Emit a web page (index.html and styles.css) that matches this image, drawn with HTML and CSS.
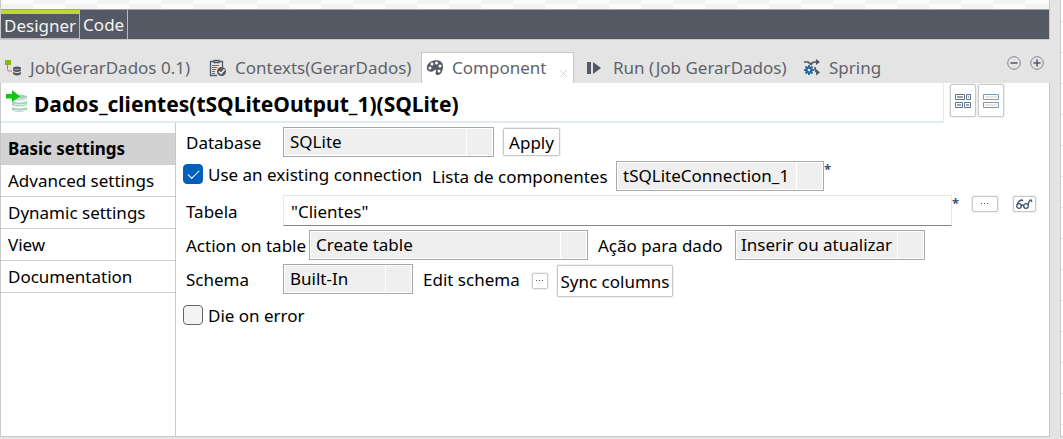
FILE: index.html
```
<!DOCTYPE html>
<html lang="pt-BR">
<head>
<meta charset="utf-8">
<meta name="viewport" content="width=device-width, initial-scale=1">
<title>Component - Dados_clientes</title>
<link rel="stylesheet" href="styles.css">
</head>
<body>
<div class="workbench">
  <main class="main">
    <section class="editor">
      <div class="canvas-edge"></div>
      <nav class="editor-tabs">
        <button class="editor-tab editor-tab-active" type="button">Designer</button>
        <button class="editor-tab" type="button">Code</button>
      </nav>
    </section>
    <section class="views">
      <div class="view-tabs">
        <button class="view-tab tab-job" type="button">
          <svg class="tab-icon" width="18" height="18" viewBox="0 0 18 18"><path d="M3.5 5v5.500q0 1.500 1.500 1.500h3" fill="none" stroke="#d9676d"/><path d="M1 1h6v5H1z" fill="#8aba00"/><g fill="#555963"><ellipse cx="13" cy="9" rx="4" ry="1.500"/><path d="M9 10q4 2 8 0v2q-4 2-8 0zM9 13q4 2 8 0v2q-4 3-8 0z"/></g></svg>
          <span>Job(GerarDados 0.1)</span>
        </button>
        <button class="view-tab tab-contexts" type="button">
          <svg class="tab-icon" width="18" height="18" viewBox="0 0 18 18"><path d="M5 2.500H1.500v14H8M10 2.500h3.500V8M5 1.500h5v2H5z" fill="none" stroke="#555963" stroke-width="1.300"/><path d="M3 6.500h7M3 8.500h5M3 10.500h4M3 12.500h3M3 14.500h3" stroke="#3979ad"/><circle cx="12.500" cy="12.500" r="4.500" fill="#555963"/><path d="M10 12.500l2 2 3.500-4" fill="none" stroke="#fff" stroke-width="1.400"/></svg>
          <span>Contexts(GerarDados)</span>
        </button>
        <button class="view-tab view-tab-active tab-component" type="button">
          <svg class="tab-icon" width="18" height="18" viewBox="0 0 18 18"><path d="M8 1.500C12 .5 17 2 17 7c0 5-2 9-5 9-2.500 0-3-2-2-4 .5-1.500-1-1.500-2-.5-2 2-6 1.500-7-1.500C.3 6 3 2.500 8 1.500z" fill="#555963"/><g fill="#fff"><circle cx="4" cy="9" r="1.500"/><circle cx="6" cy="5" r="1.500"/><circle cx="10.500" cy="4" r="1.500"/><circle cx="14" cy="7" r="1.500"/><circle cx="13" cy="12" r="1.500"/></g></svg>
          <span>Component</span>
          <svg class="tab-close" width="10" height="10" viewBox="0 0 10 10"><path d="M1 1l7 7M8 1L1 8" stroke="#d6d6d6"/></svg>
        </button>
        <button class="view-tab tab-run" type="button">
          <svg class="tab-icon" width="14" height="14" viewBox="0 0 14 14"><path d="M0 1h4v12H0zM6 1l8 6-8 6z" fill="#555963"/></svg>
          <span>Run (Job GerarDados)</span>
        </button>
        <button class="view-tab tab-spring" type="button">
          <svg class="tab-icon" width="18" height="18" viewBox="0 0 18 18"><path d="M1 3h4l4 3M7 6q2-3 5-3h3M12 8q0 5 3 5.500" fill="none" stroke="#555963" stroke-width="1.700"/><path d="M13 0l4 3-4 3zM13 10l4 3.500-4 3z" fill="#555963"/><circle cx="6" cy="11" r="5" fill="#fff"/><circle cx="6" cy="11" r="2.500" fill="none" stroke="#2a6a9e" stroke-width="2.400"/><path d="M6 6v2M6 14v2M1 11h2M9 11h2M2.500 7.500l1.500 1.500M8 13l1.500 1.500M2.500 14.500L4 13M8 9l1.500-1.500" stroke="#2a6a9e" stroke-width="2"/></svg>
          <span>Spring</span>
        </button>
        <div class="window-controls">
          <button class="round-button" type="button" aria-label="Minimize"><svg width="14" height="14" viewBox="0 0 14 14"><circle cx="7" cy="7" r="6.300" fill="none" stroke="#858792"/><path d="M3.500 7h7" stroke="#555963" stroke-width="1.500"/></svg></button>
          <button class="round-button" type="button" aria-label="Maximize"><svg width="14" height="14" viewBox="0 0 14 14"><circle cx="7" cy="7" r="6.300" fill="none" stroke="#858792"/><path d="M3.500 7h7M7 3.500v7" stroke="#555963" stroke-width="1.500"/></svg></button>
        </div>
      </div>
      <div class="panel">
        <header class="panel-header">
          <div class="title-bar">
            <svg width="24" height="24" viewBox="0 0 24 24"><g fill="#a5cfbb"><path d="M8 6q7-3 14 0v3q-7 3-14 0zM7 11q8 3 15 0v4q-8 3-15 0zM7 17q8 3 15 0v3q-8 4-15 0z"/></g><path d="M10 8q6 3 12 0M9 14q6 2 12 0M9 20q6 2 12 0" fill="none" stroke="#e2f2eb"/><path d="M1 4h6V0l8 6.500L7 12V8.500H1z" fill="#14c414"/></svg>
            <h1 class="title">Dados_clientes(tSQLiteOutput_1)(SQLite)</h1>
          </div>
          <div class="layout-buttons">
            <button class="raised layout-button" type="button" aria-label="Table layout"><svg width="16" height="14" viewBox="0 0 16 14"><path d="M.5.500h9v5h-9zM11.500.500h4v5h-4zM.5 8.500h7v5h-7zM9.500 8.500h6v5h-6z" fill="#fff" stroke="#5b7395"/><path d="M2 3h6M13 3h1M2 11h4M11 11h3" stroke="#a0a0a0" stroke-width="2"/></svg></button>
            <button class="raised layout-button" type="button" aria-label="List layout"><svg width="16" height="14" viewBox="0 0 16 14"><path d="M.5.500h15v5H.500zM.5 8.500h15v5H.500z" fill="#fff" stroke="#7d9abe"/><path d="M2 3h12M2 11h12" stroke="#ebe5d4" stroke-width="2"/></svg></button>
          </div>
        </header>
        <div class="panel-body">
          <nav class="sidebar">
            <button class="side-item side-item-active" type="button">Basic settings</button>
            <button class="side-item" type="button">Advanced settings</button>
            <button class="side-item" type="button">Dynamic settings</button>
            <button class="side-item" type="button">View</button>
            <button class="side-item" type="button">Documentation</button>
          </nav>
          <form class="form">
            <div class="row">
              <label class="label label-first" for="database">Database</label>
              <select class="combo combo-database" id="database"><option>SQLite</option></select>
              <button class="raised apply-button" type="button">Apply</button>
            </div>
            <div class="row">
              <div class="check-field existing-field">
                <input class="check" type="checkbox" id="existing" checked>
                <label class="check-label" for="existing">Use an existing connection</label>
              </div>
              <label class="label components-label" for="components">Lista de componentes</label>
              <select class="combo combo-connection" id="components"><option>tSQLiteConnection_1</option></select>
              <span class="required">*</span>
            </div>
            <div class="row row-table">
              <label class="label label-first" for="table">Tabela</label>
              <input class="text-box" type="text" id="table" value="&quot;Clientes&quot;">
              <span class="required">*</span>
              <div class="table-tools">
                <button class="raised tool-button" type="button" aria-label="Browse"><svg width="8" height="4" viewBox="0 0 8 4"><path d="M0 1.500h1M3 1.500h1M6 1.500h1" stroke="#555963"/></svg></button>
                <button class="raised tool-button view-button" type="button" aria-label="View"><svg width="17" height="11" viewBox="0 0 17 11"><g fill="none" stroke="#3b5575" stroke-width="1.300"><circle cx="3" cy="7" r="2.300"/><circle cx="10" cy="7" r="2.300"/><path d="M5.300 7q1.200-2 2.400 0M1 6q2-5 5-5l1 1M12 6q1-5 3-5l1 2"/></g></svg></button>
              </div>
            </div>
            <div class="row">
              <label class="label action-label" for="action">Action on table</label>
              <select class="combo combo-action" id="action"><option>Create table</option></select>
              <label class="label data-label" for="data">Ação para dado</label>
              <select class="combo combo-data" id="data"><option>Inserir ou atualizar</option></select>
            </div>
            <div class="row row-schema">
              <label class="label label-first" for="schema">Schema</label>
              <select class="combo combo-schema" id="schema"><option>Built-In</option></select>
              <span class="label edit-label">Edit schema</span>
              <button class="raised edit-button" type="button" aria-label="Edit schema"><svg width="8" height="4" viewBox="0 0 8 4"><path d="M0 1.500h1M3 1.500h1M6 1.500h1" stroke="#3b5575"/></svg></button>
              <button class="raised sync-button" type="button">Sync columns</button>
            </div>
            <div class="row">
              <div class="check-field">
                <input class="check" type="checkbox" id="die">
                <label class="check-label" for="die">Die on error</label>
              </div>
            </div>
          </form>
        </div>
      </div>
    </section>
  </main>
  <aside class="side-list"></aside>
</div>
</body>
</html>
```
FILE: styles.css
```
* { box-sizing: border-box; }
body {
  margin: 0;
  background: #e4e4e4;
  color: #000;
  font: 17px/24px "Noto Sans", "Open Sans", sans-serif;
}
button, input, select { font: inherit; color: inherit; margin: 0; }
button { padding: 0; border: 0; background: none; white-space: nowrap; }
svg { display: block; flex: none; }

.workbench {
  display: flex;
  gap: 10px;
  min-height: 100vh;
  padding-bottom: 2px;
}
.main { flex: 1; min-width: 0; display: flex; flex-direction: column; }
.side-list {
  width: 3px;
  border-left: 1px solid #c8c8c8;
  border-bottom: 1px solid #c8c8c8;
  background: repeating-linear-gradient(#fff 0 21px, #e4e4e4 21px 22px, #fff 22px 31px);
}

.editor { border: 1px solid #c8c8c8; border-top: 0; }
.canvas-edge {
  height: 10px;
  border-bottom: 1px solid #a0a0a0;
  background:
    repeating-linear-gradient(90deg, #fbfbfb 0 32px, #f2f2f2 32px 64px) 0 0 / 100% 4px no-repeat,
    repeating-linear-gradient(90deg, #f2f2f2 0 32px, #fbfbfb 32px 64px);
}
.editor-tabs { display: flex; height: 29px; background: #555963; }
.editor-tab {
  padding: 1px 3px 0;
  border-right: 1px solid #bababa;
  color: #f4f4f4;
}
.editor-tab-active {
  padding-top: 0;
  border-top: 4px solid #bfd730;
  border-bottom: 1px solid #bababa;
  line-height: 22px;
}

.views { flex: 1; display: flex; flex-direction: column; }
.view-tabs {
  display: flex;
  align-items: flex-end;
  height: 43px;
  padding-left: 1px;
}
.view-tab {
  display: flex;
  align-items: center;
  gap: 8px;
  height: 31px;
  padding: 0 0 0 3px;
  color: #5f636d;
}
.tab-job { width: 203px; }
.tab-contexts { width: 217px; padding-left: 5px; }
.view-tab-active { background: #fff; border: 1px solid #c8c8c8; border-bottom: 0; }
.tab-component { width: 153px; padding-left: 4px; }
.tab-close { margin: 11px 4px 0 auto; }
.tab-run { width: 219px; padding-left: 13px; gap: 12px; }
.tab-spring { padding-left: 10px; }
.window-controls { display: flex; gap: 9px; margin: 0 6px 13px auto; }

.panel {
  flex: 1;
  display: flex;
  flex-direction: column;
  background: #fff;
  border: solid #c8c8c8;
  border-width: 0 1px 1px;
}
.panel-header { display: flex; align-items: flex-start; height: 40px; }
.title-bar {
  flex: 1;
  display: flex;
  align-items: center;
  gap: 5px;
  height: 40px;
  padding-left: 4px;
  border-right: 1px solid #e1e9f2;
  border-bottom: 2px solid #e1e9f2;
}
.title { margin: 4px 0 0; font-size: 21px; line-height: 28px; font-weight: 700; }
.layout-buttons { display: flex; gap: 2px; margin: 1px 45px 0 6px; }
.raised {
  border: 1px solid #c8c8c8;
  border-radius: 2px;
  background: #fff;
  box-shadow: 0 0 0 1px #f0f0f0;
}
.layout-button { display: grid; place-items: center; width: 26px; height: 33px; }

.panel-body { flex: 1; display: flex; }
.sidebar {
  width: 175px;
  padding-top: 10px;
  border-right: 1px solid #c8c8c8;
  display: flex;
  flex-direction: column;
}
.side-item {
  height: 32px;
  padding: 0 7px;
  border-bottom: 1px solid #d0d0d0;
  text-align: left;
}
.side-item-active { background: #d2d2d2; font-weight: 700; }

.form {
  flex: 1;
  display: flex;
  flex-direction: column;
  gap: 4px;
  padding: 4px 25px 0 7px;
}
.row { display: flex; align-items: center; min-height: 30px; }
.label { padding-top: 2px; white-space: nowrap; }
.label-first { width: 100px; padding-left: 3px; }
.combo {
  appearance: none;
  height: 30px;
  padding: 0 6px;
  border: 1px solid #a8a8ac;
  border-radius: 0;
  background: linear-gradient(#fff, #fff) right 26px top / 1px 100% no-repeat #efefef;
  box-shadow: inset 0 0 0 1px #fff;
}
.combo-database { width: 211px; }
.combo-connection { width: 208px; }
.combo-action { width: 279px; }
.combo-data { width: 190px; padding: 0 5px; }
.combo-schema { width: 130px; }
.apply-button { width: 57px; height: 28px; margin-left: 9px; padding-top: 2px; }
.check-field { align-self: flex-start; display: flex; align-items: center; }
.check {
  appearance: none;
  width: 20px;
  height: 20px;
  border: 1px solid #66666a;
  border-radius: 4px;
  background: #f3f3f3;
}
.check:checked { display: grid; place-items: center; border-color: #005fb8; background: #005fb8; }
.check:checked::before {
  content: "";
  width: 10px;
  height: 5px;
  margin-bottom: 3px;
  border: solid #fff;
  border-width: 0 0 1px 1px;
  rotate: -45deg;
}
.check-label { padding: 2px 0 0 5px; white-space: nowrap; }
.existing-field { width: 249px; }
.components-label { width: 184px; }
.required { align-self: flex-start; color: #3b5575; font-size: 13px; font-weight: 700; line-height: 16px; }
.row-table { min-height: 31px; }
.text-box {
  flex: 1;
  min-width: 0;
  height: 31px;
  padding: 2px 7px 0;
  border: 1px solid #e8e8e8;
  border-bottom-color: #858585;
  background: #fff;
}
.table-tools { align-self: flex-start; display: flex; gap: 15px; margin: 1px -12px 0 13px; }
.tool-button { display: grid; place-items: center; width: 26px; height: 16px; }
.view-button { width: 23px; }
.action-label { width: 126px; padding-left: 3px; }
.data-label { width: 147px; padding-left: 10px; }
.row-schema { min-height: 34px; }
.row-schema .combo, .row-schema .label { align-self: flex-start; }
.row-schema .label { padding-top: 4px; }
.edit-label { width: 119px; padding-left: 10px; }
.edit-button { display: grid; place-items: center; width: 16px; height: 16px; }
.sync-button { width: 116px; height: 32px; margin-left: 9px; padding-top: 2px; }
```
